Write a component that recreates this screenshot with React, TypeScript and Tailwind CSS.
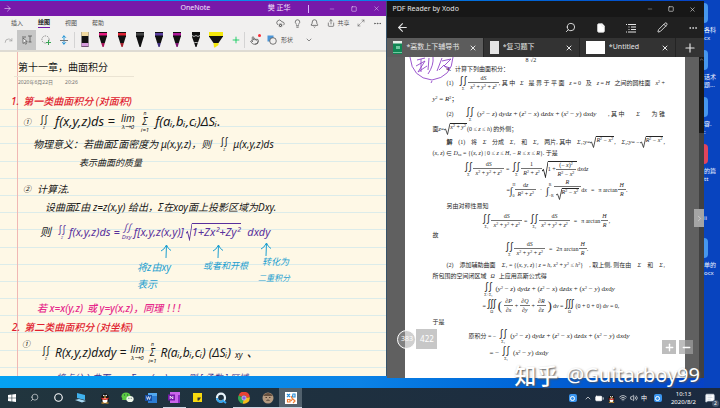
import type { ReactNode } from 'react'
import {
  ArrowLeft,
  ArrowRight,
  BatteryFull,
  Bell,
  ChevronDown,
  ChevronRight,
  ChevronUp,
  Circle,
  CloudCog,
  Ellipsis,
  File,
  Lightbulb,
  Maximize2,
  MessageSquareText,
  Minus,
  MoveVertical,
  Pencil,
  Plus,
  Pointer,
  Redo,
  Search,
  Share,
  Square,
  Volume2,
  Wifi,
  X,
} from 'lucide-react'

interface BoxProps {
  className?: string
  children?: ReactNode
}

/* ---------- formula helpers ---------- */

function Frac({ top, bottom }: { top: ReactNode; bottom: ReactNode }) {
  return (
    <span className="inline-flex flex-col items-center leading-[7px]">
      <span className="px-0.5">{top}</span>
      <span className="border-t border-neutral-500 px-0.5 pt-px">{bottom}</span>
    </span>
  )
}

function Root({ children }: BoxProps) {
  return (
    <span className="inline-flex items-stretch">
      <svg viewBox="0 0 6 12" preserveAspectRatio="none" className="w-[6px] self-stretch" fill="none" stroke="currentColor">
        <path d="M0 7l1.5-1L3.5 11.5 6 .5" strokeWidth="0.8" />
      </svg>
      <span className="border-t border-current pr-px">{children}</span>
    </span>
  )
}

function Int({ n = 2, sub, sup }: { n?: 1 | 2 | 3; sub?: string; sup?: string }) {
  const sign = n === 1 ? '∫' : n === 2 ? '∬' : '∭'
  return (
    <span className="inline-flex items-center">
      <span className="inline-flex flex-col items-center">
        <span className="text-[10px] leading-[11px] font-normal not-italic">{sign}</span>
        {sub && !sup && <span className="text-[4px] leading-[4px]">{sub}</span>}
      </span>
      {sup && (
        <span className="flex h-4 flex-col justify-between text-[4px] leading-[5px]">
          <span>{sup}</span>
          <span>{sub}</span>
        </span>
      )}
    </span>
  )
}

const Sq = () => <sup className="text-[4px] not-italic">2</sup>
const V = ({ children }: BoxProps) => <i>{children}</i>

function SphereFrac() {
  return (
    <Frac
      top={<>d<V>S</V></>}
      bottom={<><V>x</V><Sq /> + <V>y</V><Sq /> + <V>z</V><Sq /></>}
    />
  )
}

function Flux() {
  return (
    <span className="text-[7px] whitespace-nowrap">
      (<V>y</V><Sq /> − <V>z</V>) d<V>y</V>d<V>z</V> + (<V>z</V><Sq /> − <V>x</V>) d<V>z</V>d<V>x</V> + (<V>x</V><Sq /> − <V>y</V>) d<V>x</V>d<V>y</V>
    </span>
  )
}

/* ---------- OneNote ---------- */

function Pen({ tip, band }: { tip: string; band: string }) {
  return (
    <svg viewBox="0 0 10 16" className="h-4 w-[10px]">
      <path d="M1 0h8v5H1z" fill="#111" />
      <path d="M1 1h8v2.5H1z" fill={band} />
      <path d="M1.3 5h7.4L6.8 11H3.2z" fill="#111" />
      <path d="M3.2 11h3.6L5.7 15H4.5z" fill={tip} />
    </svg>
  )
}

function Ribbon() {
  return (
    <div className="flex h-5 shrink-0 items-center bg-[#f1f0ef] text-neutral-600">
      <button aria-label="重做" className="flex w-[17px] justify-center text-neutral-400"><Redo size={9} /></button>
      <button aria-label="选择" className="flex h-5 w-[19px] items-center justify-center bg-[#c6c6c6]">
        <svg viewBox="0 0 12 10" className="h-[10px] w-3" fill="none" stroke="#555" strokeWidth="0.8">
          <path d="M2 3v5.5l1.5-1.3 1 2 1-.5-1-2H6.300z" fill="#fff" />
          <path d="M7 1h4M9 1v6M7.500 7h3M1 2h4" />
        </svg>
      </button>
      <button aria-label="套索" className="flex w-[19px] justify-center">
        <svg viewBox="0 0 10 10" className="size-[10px]" fill="none">
          <circle cx="4.500" cy="4.500" r="3.600" stroke="#777" strokeWidth="0.8" strokeDasharray="1.6 1" />
          <path d="M7.500 5v5M5 7.500h5" stroke="#3aa655" strokeWidth="1" />
        </svg>
      </button>
      <button aria-label="插入空间" className="relative flex w-[18px] items-center justify-center text-sky-600">
        <MoveVertical size={10} />
        <span className="absolute h-px w-2 bg-neutral-500" />
      </button>
      <span className="mx-px h-4 w-px bg-neutral-300" />
      <div className="flex h-5 w-[151px] items-center justify-between pr-1 pl-1">
        <svg viewBox="0 0 10 16" className="h-4 w-[10px]">
          <path d="M1.500 0h7v15h-7z" fill="#111" />
          <path d="M1.500 0h7v4h-7z" fill="#f0d9a0" />
          <path d="M1.500 11h7v3.500h-7z" fill="#d59bdc" />
        </svg>
        <Pen band="#e5197f" tip="#a51258" />
        <Pen band="#dd2233" tip="#a3202c" />
        <Pen band="#444" tip="#111" />
        <Pen band="#5b3fa0" tip="#3f2d7c" />
        <Pen band="#b0189a" tip="#7c1270" />
        <svg viewBox="0 0 10 16" className="h-4 w-[10px]">
          <path d="M1 0h8v5L6.800 11 5.500 15h-1L3.200 11 1 5z" fill="#111" />
          <path d="M1 3.500l2 1 2-1 2 1 2-1M3.300 10.500h3.400" stroke="#ddd" strokeWidth="0.8" fill="none" />
        </svg>
        <svg viewBox="0 0 14 16" className="h-4 w-[14px]">
          <path d="M0 0h14v4.500L9.500 11h-5L0 4.500z" fill="#111" />
          <path d="M0 0h14v4H0zM4.500 11h5v2l-3.500 2.500H5z" fill="#f3e70c" />
        </svg>
      </div>
      <button aria-label="添加笔" className="flex w-[17px] justify-center text-green-500"><Plus size={10} /></button>
      <span className="h-4 w-px bg-neutral-300" />
      <button aria-label="触摸绘图" className="relative flex w-[18px] justify-center">
        <Pointer size={9} />
        <span className="absolute -top-0.5 right-0.5 size-[3px] rounded-full bg-red-500" />
      </button>
      <button className="flex items-center gap-1 pl-1 text-[6px]">
        <svg viewBox="0 0 10 10" className="size-[10px]">
          <path d="M.5.5h6v6h-6z" fill="#4b96d8" />
          <circle cx="6" cy="6" r="3.300" fill="#f1f0ef" stroke="#555" strokeWidth="0.800" />
        </svg>
        形状
        <ChevronDown size={8} className="ml-2" />
      </button>
    </div>
  )
}

function Ink({ className, children }: BoxProps) {
  return <div className={`absolute flex h-5 items-center whitespace-nowrap italic ${className}`}>{children}</div>
}

function Under({ top, mid, bottom }: { top?: string; mid: string; bottom: string }) {
  return (
    <span className="flex flex-col items-center">
      {top && <span className="text-[5px] leading-[6px]">{top}</span>}
      <span className="text-[10px] leading-[11px]">{mid}</span>
      <span className="text-[6px] leading-[7px]">{bottom}</span>
    </span>
  )
}

function InkArrow({ className }: BoxProps) {
  return (
    <svg viewBox="0 0 12 14" className={`absolute h-[14px] w-3 ${className}`} fill="none" stroke="#1d9fd0" strokeWidth="1">
      <path d="M6 14L6.500 1M1 7q3-1 5.500-6Q8 5 11 6.500" />
    </svg>
  )
}

const RULES = Array.from({ length: 16 }, (_, i) => i)

function NoteCanvas() {
  return (
    <div className="relative min-h-0 flex-1 overflow-hidden border-t-2 border-[#dedbd3] bg-[#fef8e6] text-[10px] text-neutral-900">
      <div className="absolute inset-x-0 top-[57px] bottom-[8px] flex flex-col justify-between">
        {RULES.map((i) => (
          <span key={i} className="h-px bg-[#dcecea]" />
        ))}
      </div>
      <span className="absolute inset-y-0 left-[17px] w-px bg-[#f0b8b4]" />

      <h1 className="absolute top-[7px] left-[18px] text-[10px] leading-4 whitespace-nowrap">第十一章，曲面积分</h1>
      <div className="absolute top-[24px] left-[14px] flex w-[120px] gap-3 border-t border-[#ebe4d3] pt-0.5 pl-1 text-[5px] leading-[6px] text-neutral-500">
        <span>2020年6月22日</span>
        <span>20:26</span>
      </div>

      <Ink className="top-[39px] left-[11px] gap-1 font-medium text-[#e0202e]">
        <span>1.</span>第一类曲面积分 (对面积)
      </Ink>
      <Ink className="top-[60px] left-[23px] text-[8px]">①</Ink>
      <Ink className="top-[60px] left-[39px] gap-1.5 text-[13px]">
        <Int sub="Σ" />f(x,y,z)ds =
        <Under mid="lim" bottom="λ→0" />
        <Under top="n" mid="Σ" bottom="i=1" />f(aᵢ,bᵢ,cᵢ)ΔSᵢ.
      </Ink>
      <Ink className="top-[82px] left-[33px]">
        物理意义：若曲面Σ面密度为 μ(x,y,z)，则<span className="w-2" /><Int sub="Σ" /><span className="w-1" />μ(x,y,z)ds
      </Ink>
      <Ink className="top-[101px] left-[79px] text-[9px]">表示曲面的质量</Ink>

      <Ink className="top-[127px] left-[23px] gap-1.5"><span className="text-[8px]">②</span>计算法.</Ink>
      <Ink className="top-[145px] left-[45px]">设曲面Σ由 z=z(x,y) 给出，Σ在xoy面上投影区域为Dxy.</Ink>
      <Ink className="top-[170px] left-[40px] gap-0.5 text-[11px] text-[#58309c]">
        <span className="mr-1 text-neutral-900">则</span>
        <Int sub="Σ" />f(x,y,z)ds =<Under mid="∬" bottom="Dxy" />f[x,y,z(x,y)]
        <Root>1+Zx²+Zy²</Root><span className="ml-1">dxdy</span>
      </Ink>

      <InkArrow className="top-[192px] left-[160px]" />
      <InkArrow className="top-[192px] left-[212px]" />
      <InkArrow className="top-[190px] left-[260px]" />
      <Ink className="top-[205px] left-[137px] text-[#1d9fd0]">将z由xy</Ink>
      <Ink className="top-[222px] left-[137px] text-[#1d9fd0]">表示</Ink>
      <Ink className="top-[204px] left-[203px] text-[9px] text-[#1d9fd0]">或者和开根</Ink>
      <Ink className="top-[200px] left-[262px] text-[9px] text-[#1d9fd0]">转化为</Ink>
      <Ink className="top-[216px] left-[258px] text-[8px] text-[#1d9fd0]">二重积分</Ink>

      <Ink className="top-[246px] left-[37px] gap-1 font-medium text-[#e62a8c]">
        <span>若 x=x(y,z)</span><span>或 y=y(x,z)，同理</span><span>! ! !</span>
      </Ink>
      <Ink className="top-[265px] left-[12px] gap-1 font-medium text-[#e0202e]">
        <span>2.</span>第二类曲面积分 (对坐标)
      </Ink>
      <Ink className="top-[282px] left-[22px] text-[8px]">①</Ink>
      <Ink className="top-[291px] left-[41px] gap-1 text-[12px]">
        <Int sub="Σ" />R(x,y,z)dxdy =
        <Under mid="lim" bottom="λ→0" />
        <Under top="n" mid="Σ" bottom="i=1" />R(aᵢ,bᵢ,cᵢ) (ΔSᵢ)<sub className="text-[8px]">xy</sub>、
      </Ink>
      <Ink className="top-[316px] left-[56px] gap-3 text-[9px] text-[#3f3390]">
        <span>将点分入曲面，</span>
        <span>Σ:z=z(x,y)，</span>
        <span>则 [ 函数 ] 区域</span>
      </Ink>
    </div>
  )
}

function OneNote() {
  return (
    <section className="mt-px mb-3 flex min-w-0 flex-[387] flex-col border-r border-[#37536a] bg-[#f1f0ef]">
      <header className="flex h-[15px] shrink-0 items-center justify-between bg-[#7719aa] pr-1.5 pl-[3px] text-[7px] text-purple-100">
        <button aria-label="前进" className="flex w-[120px]"><ArrowRight size={9} strokeWidth={1.500} /></button>
        <span>OneNote</span>
        <div className="flex items-center">
          <span>樊 正华</span>
          <span className="mr-5 ml-[18px] h-2 w-px bg-purple-300" />
          <button aria-label="最小化" className="mr-4"><Minus size={6} strokeWidth={1.500} /></button>
          <button aria-label="最大化" className="mr-4"><Square size={6} strokeWidth={2} /></button>
          <button aria-label="关闭"><X size={7} strokeWidth={1.500} /></button>
        </div>
      </header>
      <nav className="flex h-[14px] shrink-0 items-center justify-between pr-1 pl-[11px] text-[6px] text-neutral-600">
        <div className="flex gap-[15px]">
          <button>插入</button>
          <button className="border-b border-[#7719aa] font-bold text-neutral-900">绘图</button>
          <button>视图</button>
          <button>帮助</button>
        </div>
        <div className="flex items-center gap-2">
          <button aria-label="同步"><CloudCog size={9} /></button>
          <button aria-label="提示"><Lightbulb size={9} /></button>
          <button aria-label="通知"><Bell size={9} /></button>
          <button className="flex items-center gap-0.5"><Share size={8} />共享</button>
          <button aria-label="全屏"><Maximize2 size={8} strokeWidth={1.500} /></button>
          <button aria-label="更多"><Ellipsis size={9} /></button>
        </div>
      </nav>
      <Ribbon />
      <NoteCanvas />
    </section>
  )
}

/* ---------- PDF reader ---------- */

function Tab({ label, active, children }: { label: string; active?: boolean; children: ReactNode }) {
  return (
    <div className={`flex min-w-0 flex-1 items-center gap-1 border-r border-[#242424] px-1.5 text-neutral-200 ${active ? 'bg-[#5c5c5c]' : 'bg-[#333]'}`}>
      {children}
      <button className="flex-1 truncate text-left text-[7px]">{label}</button>
      <button aria-label="关闭标签"><X size={8} strokeWidth={3} /></button>
    </div>
  )
}

function Line({ className, children }: BoxProps) {
  return <div className={`flex items-center whitespace-nowrap ${className}`}>{children}</div>
}

function PdfPage() {
  return (
    <article className="relative h-full min-w-0 flex-1 overflow-hidden bg-white pr-5 pl-[27px] font-['Liberation_Serif','Noto_Sans_CJK_SC',serif] text-[6px] leading-[7px] text-neutral-800">
      <svg viewBox="0 0 48 28" className="absolute top-0 left-1 h-7 w-12" fill="none" stroke="#9145c8" strokeWidth="0.9">
        <path d="M1 0q2 21 22 23Q43 20 44 0M8 3l8-2M7 9l9-5-7 11 9-6M12 2v13M20 1l-1 12M24 0q1 8-5 17M28 14l5-13M33 4l9-2-7 7 6 2M30 13l5-5 5 6M22 26l1-2" />
      </svg>
      <Line className="h-[6px] items-start pl-[93px]">8 √2</Line>
      <Line className="h-3 gap-1 pl-[14px]"><b>4.</b>计算下列曲面积分：</Line>
      <Line className="h-4 justify-between pl-[14px]">
        <span>(1)</span>
        <span className="flex items-center"><Int sub="Σ" /><SphereFrac />, 其 中</span>
        <V>Σ</V><span>是 界 于 平 面</span>
        <span><V>z</V> = 0</span><span>及</span><span><V>z</V> = <V>H</V></span><span>之间的圆柱面</span><span><V>x</V><Sq /> +</span>
      </Line>
      <Line className="h-4"><span className="text-[7px]"><V>y</V><Sq /> = <V>R</V><Sq />；</span></Line>
      <Line className="h-[14px] justify-between pl-[14px]">
        <span>(2)</span>
        <span className="flex items-center gap-0.5"><Int sub="Σ" /><Flux /></span>
        <span>, 其 中</span><V>Σ</V><span>为 锥</span>
      </Line>
      <Line className="h-4">
        面<V>z</V> =<Root><V>x</V><Sq /> + <V>y</V><Sq /></Root><span>(0 ≤ <V>z</V> ≤ <V>h</V>) 的外侧；</span>
      </Line>
      <Line className="h-[10px] justify-between pl-[14px]">
        <b>解</b><span>(1)</span><span>将</span><V>Σ</V><span>分成</span><V>Σ₁</V><span>和</span><V>Σ₂</V><span>两片, 其中</span>
        <span className="flex items-center"><V>Σ₁</V>: <V>y</V> =<Root><V>R</V><Sq /> − <V>x</V><Sq /></Root>,</span>
        <span className="flex items-center"><V>Σ₂</V>: <V>y</V> = −<Root><V>R</V><Sq /> − <V>x</V><Sq /></Root>,</span>
      </Line>
      <Line className="h-3">
        <span>(<V>x</V>, <V>z</V>) ∈ <V>D</V><sub className="text-[4px]">xz</sub> = {'{'}(<V>x</V>, <V>z</V>) | 0 ≤ <V>z</V> ≤ <V>H</V>, − <V>R</V> ≤ <V>x</V> ≤ <V>R</V>{'}'}. 于是</span>
      </Line>
      <Line className="h-5 pl-[31px]">
        <Int sub="Σ" /><SphereFrac /><span className="mx-0.5">=</span><Int sub="Σ" />
        <Frac top="1" bottom={<><V>R</V><Sq /> + <V>z</V><Sq /></>} />
        <Root><span className="flex items-center">1 + <Frac top={<>(− <V>x</V>)<Sq /></>} bottom={<><V>R</V><Sq /> − <V>x</V><Sq /></>} /></span></Root>
        <span>d<V>x</V>d<V>z</V></span>
      </Line>
      <Line className="h-[22px] pl-[74px]">
        =<Int n={1} sub="0" sup="H" />
        <Frac top={<>d<V>z</V></>} bottom={<><V>R</V><Sq /> + <V>z</V><Sq /></>} />
        <span className="mx-1">·</span><Int n={1} sub="−R" sup="R" />
        <Frac top={<V>R</V>} bottom={<Root><V>R</V><Sq /> − <V>x</V><Sq /></Root>} />
        <span>d<V>x</V></span><span className="mx-1">=</span><span>π arctan</span><Frac top={<V>H</V>} bottom={<V>R</V>} />.
      </Line>
      <Line className="h-[10px] pl-[14px]">另由对称性易知</Line>
      <Line className="h-5 pl-[49px]">
        <Int sub="Σ₁" /><SphereFrac /><span className="mx-0.5">=</span><Int sub="Σ₂" /><SphereFrac />
        <span className="mx-1">=</span><span>π arctan</span><Frac top={<V>H</V>} bottom={<V>R</V>} />,
      </Line>
      <Line className="h-2">故</Line>
      <Line className="h-5 pl-[72px]">
        <Int sub="Σ" /><SphereFrac /><span className="mx-1">=</span><span>2π arctan</span><Frac top={<V>H</V>} bottom={<V>R</V>} />.
      </Line>
      <Line className="h-3 justify-between pl-[14px]">
        <span>(2)</span><span>添加辅助曲面</span>
        <span><V>Σ₁</V> = {'{'}(<V>x</V>, <V>y</V>, <V>z</V>) | <V>z</V> = <V>h</V>, <V>x</V><Sq /> + <V>y</V><Sq /> ≤ <V>h</V><Sq />{'}'}</span>
        <span>, 取上侧, 则在由</span><V>Σ</V><span>和</span><V>Σ₁</V>
      </Line>
      <Line className="h-[10px] gap-1">所包围的空间闭区域 <V>Ω</V> 上应用高斯公式得</Line>
      <Line className="h-4 gap-0.5 pl-[51px]"><Int sub="Σ+Σ₁" /><Flux /></Line>
      <Line className="h-[18px] gap-px pl-[50px]">
        =<Int n={3} sub="Ω" /><span className="text-[13px] leading-4 font-light">(</span>
        <Frac top={<>∂<V>P</V></>} bottom={<>∂<V>x</V></>} />+
        <Frac top={<>∂<V>Q</V></>} bottom={<>∂<V>y</V></>} />+
        <Frac top={<>∂<V>R</V></>} bottom={<>∂<V>z</V></>} />
        <span className="text-[13px] leading-4 font-light">)</span>
        <span>d<V>v</V> =</span><Int n={3} sub="Ω" /><span>(0 + 0 + 0) d<V>v</V> = 0,</span>
      </Line>
      <Line className="h-[14px]">于是</Line>
      <Line className="h-[14px] gap-0.5 pl-[36px]">原积分 = −<Int sub="Σ₁" /><Flux /></Line>
      <Line className="h-5 gap-0.5 pl-[57px] text-[7px]">= −<Int sub="Σ₁" /><span>(<V>x</V><Sq /> − <V>y</V>) d<V>x</V>d<V>y</V></span></Line>
    </article>
  )
}

function PdfReader() {
  return (
    <section className="relative mt-px mb-[10px] flex min-w-0 flex-[317] flex-col bg-[#202020] text-neutral-200">
      <header className="flex h-4 shrink-0 items-center justify-between bg-[#171717] pr-2 pl-[5px] text-[7px]">
        <span>PDF Reader by Xodo</span>
        <div className="flex items-center gap-[15px]">
          <button aria-label="最小化"><Minus size={6} strokeWidth={1.500} /></button>
          <button aria-label="最大化"><Square size={6} strokeWidth={2.500} /></button>
          <button aria-label="关闭"><X size={7} strokeWidth={2} /></button>
        </div>
      </header>
      <nav className="flex h-[21px] shrink-0 items-center justify-between pr-[6px] pl-[9px]">
        <button aria-label="返回"><ArrowLeft size={13} strokeWidth={2} /></button>
        <div className="flex items-center gap-5">
          <button aria-label="搜索"><Search size={11} className="-scale-x-100" /></button>
          <button aria-label="页面"><File size={10} fill="white" /></button>
          <button aria-label="目录">
            <svg viewBox="0 0 11 10" className="h-[10px] w-[11px]" stroke="currentColor" strokeWidth="1">
              <path d="M0 1.500h1M2 1.500h8M2.500 4h1M5 4h5M2.500 6.500h1M5 6.500h5M0 9h1M2 9h8" />
            </svg>
          </button>
          <button aria-label="编辑"><Pencil size={11} /></button>
          <button aria-label="更多"><Ellipsis size={10} /></button>
        </div>
      </nav>
      <div className="flex h-[19px] shrink-0 bg-[#333]">
        <Tab label="*高数上下辅导书" active>
          <svg viewBox="0 0 9 13" className="h-[13px] w-[9px]">
            <path d="M0 0h9v13H0z" fill="#118654" />
            <path d="M0 0h9v2.500H0z" fill="#e6efe9" />
            <path d="M3 5h4v3H3zM0 11h9v1H0z" fill="#70c9a0" />
          </svg>
        </Tab>
        <Tab label="*复习题下"><span className="h-[13px] w-[9px] bg-neutral-200" /></Tab>
        <Tab label="*Untitled"><span className="h-[13px] w-[19px] bg-white" /></Tab>
        <button aria-label="新标签" className="flex w-7 items-center justify-center"><Plus size={14} strokeWidth={2} /></button>
      </div>
      <div className="flex min-h-0 flex-1 bg-[#606060]">
        <span className="w-[18px]" />
        <PdfPage />
        <span className="w-[14px]" />
        <div className="flex w-[5px] flex-col items-center bg-[#414141]">
          <div className="h-[76px] w-full bg-[#191919]"><ChevronUp size={5} /></div>
        </div>
      </div>

      {/* floating page controls */}
      <button aria-label="下一页" className="absolute top-[208px] right-0 flex h-[18px] w-[10px] items-center justify-center bg-[#a5a5a5]">
        <ChevronRight size={9} strokeWidth={1.500} />
      </button>
      <div className="absolute bottom-[29px] left-[10px] flex h-5 items-center text-[8px] text-white">
        <span className="flex size-[19px] items-center justify-center rounded-full border border-white bg-neutral-400/50 text-[7px]">383</span>
        <span className="flex h-5 w-[21px] items-center justify-center bg-neutral-400/60">422</span>
      </div>
      <div className="absolute right-[11px] bottom-[24px] flex gap-[3px] text-white">
        <button aria-label="放大" className="flex size-[14px] items-center justify-center bg-neutral-400/70"><Plus size={11} strokeWidth={3} /></button>
        <button aria-label="缩小" className="flex size-[14px] items-center justify-center bg-neutral-400/70"><Minus size={11} strokeWidth={3} /></button>
      </div>
    </section>
  )
}

/* ---------- desktop ---------- */

function DesktopFile({ className, lines }: { className: string; lines: string[] }) {
  return (
    <div className="h-[47px] text-[6px] leading-[8px] text-blue-50">
      <div className={`mb-[3px] h-5 w-1 rounded-r-sm ${className}`} />
      {lines.map((line) => (
        <div key={line} className="whitespace-nowrap">{line}</div>
      ))}
    </div>
  )
}

function TaskItem({ label, active, open, children }: { label: string; active?: boolean; open?: boolean; children: ReactNode }) {
  return (
    <button
      aria-label={label}
      className={`flex flex-1 items-center justify-center border-b ${active ? 'bg-[#51616d]' : ''} ${open ? 'border-slate-300' : 'border-transparent'}`}
    >
      {children}
    </button>
  )
}

function Penguin({ className }: BoxProps) {
  return (
    <svg viewBox="0 0 12 12" className={className}>
      <ellipse cx="6" cy="6.500" rx="4" ry="5" fill="#111" />
      <ellipse cx="6" cy="8.500" rx="2.500" ry="2.800" fill="#fff" />
      <path d="M2.500 5.500q3.500 2 7 0v1.500q-3.500 2-7 0z" fill="#e02b20" />
      <circle cx="4.800" cy="3.500" r="0.800" fill="#fff" />
      <circle cx="7.200" cy="3.500" r="0.800" fill="#fff" />
      <path d="M2.500 11h3M6.500 11h3M5 5h2" stroke="#f5a623" strokeWidth="1.200" />
    </svg>
  )
}

function QBadge() {
  return (
    <span className="flex size-[8px] items-center justify-center rounded-xs bg-[#3b96f0]">
      <span className="size-[5px] rounded-full border border-white" />
    </span>
  )
}

function Taskbar() {
  return (
    <footer className="flex h-5 shrink-0 items-stretch justify-between bg-linear-to-r from-[#21353e] to-[#1b2a40] text-white">
      <div className="flex w-[42%]">
        <TaskItem label="开始">
          <svg viewBox="0 0 8 8" className="size-[8px]" fill="#fff">
            <path d="M0 1l3.600-.5v3.200H0zM4.200.4L8 0v3.700H4.200zM0 4.300h3.600v3.200L0 7zM4.200 4.300H8V8l-3.800-.5z" />
          </svg>
        </TaskItem>
        <TaskItem label="搜索"><Search size={9} strokeWidth={1.500} className="-scale-x-100" /></TaskItem>
        <TaskItem label="Cortana"><Circle size={9} strokeWidth={3} /></TaskItem>
        <TaskItem label="电脑">
          <svg viewBox="0 0 12 10" className="h-[10px] w-3">
            <path d="M2 0l8 2v5L2 5z" fill="#3fb2ee" />
            <path d="M0 7l4-1 7 2-4 1.500z" fill="#a9d9f2" />
          </svg>
        </TaskItem>
        <TaskItem label="QQ"><Penguin className="size-3" /></TaskItem>
        <TaskItem label="微信">
          <svg viewBox="0 0 13 11" className="h-[11px] w-[13px]">
            <path d="M1 8l1-2.500h3V8z" fill="#5bc944" />
            <ellipse cx="5" cy="4.200" rx="4.500" ry="3.800" fill="#5bc944" />
            <ellipse cx="9" cy="7" rx="3.700" ry="3.100" fill="#ecf5e9" />
            <path d="M3 3h1M6 3h1M7.500 6.300h.8M9.800 6.300h.8" stroke="#244" />
          </svg>
        </TaskItem>
        <TaskItem label="Word">
          <svg viewBox="0 0 12 10" className="h-[10px] w-3">
            <path d="M3 0h9v10H3z" fill="#2b7cd3" />
            <path d="M3 0h9v3H3z" fill="#52a8ee" />
            <path d="M0 2h7v6H0z" fill="#184fa5" />
            <path d="M1.500 3.500l1 3 1-3 1 3 1-3" stroke="#fff" strokeWidth="0.700" fill="none" />
          </svg>
        </TaskItem>
        <TaskItem label="OneNote" open>
          <svg viewBox="0 0 12 11" className="h-[11px] w-3">
            <path d="M2 0h10v11H2z" fill="#ca64ea" />
            <path d="M10 3h2v8h-2z" fill="#8a2cc0" />
            <path d="M0 2.500h7v6H0z" fill="#7719aa" />
            <path d="M2.200 7V4l2.600 3V4" stroke="#fff" strokeWidth="0.800" fill="none" />
          </svg>
        </TaskItem>
        <TaskItem label="便笺">
          <svg viewBox="0 0 9 9" className="size-[9px]">
            <path d="M0 0h9v9H0z" fill="#f8d90f" />
            <path d="M4.500 4.500H8L6 7.500H4.500z" fill="#333" />
          </svg>
        </TaskItem>
        <TaskItem label="QQ浏览器">
          <svg viewBox="0 0 12 12" className="size-3" fill="none">
            <circle cx="6" cy="5.700" r="4" stroke="#e8f4fc" strokeWidth="2.200" />
            <path d="M2 6a4 4 0 0 0 5 3.800M7 8l4 3" stroke="#35a5ef" strokeWidth="2" />
          </svg>
        </TaskItem>
        <TaskItem label="浏览器" open>
          <svg viewBox="0 0 12 12" className="size-3" fill="none" strokeWidth="3.500">
            <path d="M2.200 4.200A4 4 0 0 1 10 5.500" stroke="#e84335" />
            <path d="M10 5.500A4 4 0 0 1 5 9.900" stroke="#f4bc18" />
            <path d="M5 9.900A4 4 0 0 1 2.200 4.200" stroke="#36a852" />
            <circle cx="6" cy="6" r="2.200" fill="#8a5ce8" stroke="#fff" strokeWidth="0.600" />
          </svg>
        </TaskItem>
        <TaskItem label="照片" open>
          <svg viewBox="0 0 12 12" className="size-3">
            <circle cx="6" cy="6" r="5.500" fill="#b49a80" />
            <path d="M1.500 3q4.500-4 9 0v1h-9z" fill="#65503f" />
            <path d="M3.500 5.500h1.500M7 5.500h1.500M4.500 8.500q1.500-1 3 0" stroke="#3a2a20" strokeWidth="0.800" fill="none" />
          </svg>
        </TaskItem>
        <TaskItem label="Xodo" active open>
          <svg viewBox="0 0 12 12" className="size-3" fill="none">
            <path d="M0 0h12v12H0z" fill="#fff" />
            <path d="M2 2l3 3M5 2L2 5M8 2h2v3H7.500z" stroke="#2d8fd8" strokeWidth="1.200" />
            <path d="M2.500 7.500h2.500V10H2.500zM8 7l2 2-2 2M6 4l1.500 3L6 9" stroke="#ef7d34" strokeWidth="1.200" />
          </svg>
        </TaskItem>
      </div>
      <div className="flex items-center gap-[3px] pr-[5px]">
        <QBadge />
        <ChevronUp size={8} className="ml-1" />
        <BatteryFull size={9} fill="white" />
        <Penguin className="size-[9px]" />
        <Wifi size={8} />
        <Volume2 size={8} />
        <span className="text-[6px]">中</span>
        <span className="ml-1"><QBadge /></span>
        <div className="mx-1.5 text-center text-[6px] leading-[8px]">
          <div>10:13</div>
          <div>2020/8/2</div>
        </div>
        <span className="relative">
          <MessageSquareText size={10} fill="white" stroke="#cbd5e1" />
          <span className="absolute -right-1 -bottom-1 flex size-[7px] items-center justify-center rounded-full bg-slate-600 text-[5px]">2</span>
        </span>
      </div>
    </footer>
  )
}

export default function App() {
  return (
    <main className="relative flex h-screen flex-col overflow-hidden bg-linear-to-r from-[#05a2f2] via-[#0b82e6] to-[#083fc4] font-['Noto_Sans','Noto_Sans_CJK_SC',sans-serif]">
      <div className="flex min-h-0 flex-1">
        <OneNote />
        <PdfReader />
        <aside className="w-4 shrink-0 overflow-hidden bg-[#0844bf] pt-[3px]">
          <DesktopFile className="bg-[#4697ef]" lines={['各科', 'cx']} />
          <DesktopFile className="bg-[#4697ef]" lines={['话术', '题...']} />
          <DesktopFile className="bg-[#4697ef]" lines={['容.', ':']} />
          <DesktopFile className="bg-[#e0455c]" lines={['的篇', 'tt']} />
          <DesktopFile className="bg-transparent" lines={['ii']} />
          <DesktopFile className="bg-[#4697ef]" lines={['单的', 'ocx']} />
        </aside>
      </div>
      <Taskbar />
      <div className="absolute right-5 bottom-[19px] flex items-center gap-2 text-[20px] leading-7 text-white [text-shadow:1px_1px_2px_#555]">
        <span className="text-[22px] font-medium">知乎</span>
        <span>@Guitarboy99</span>
      </div>
    </main>
  )
}
